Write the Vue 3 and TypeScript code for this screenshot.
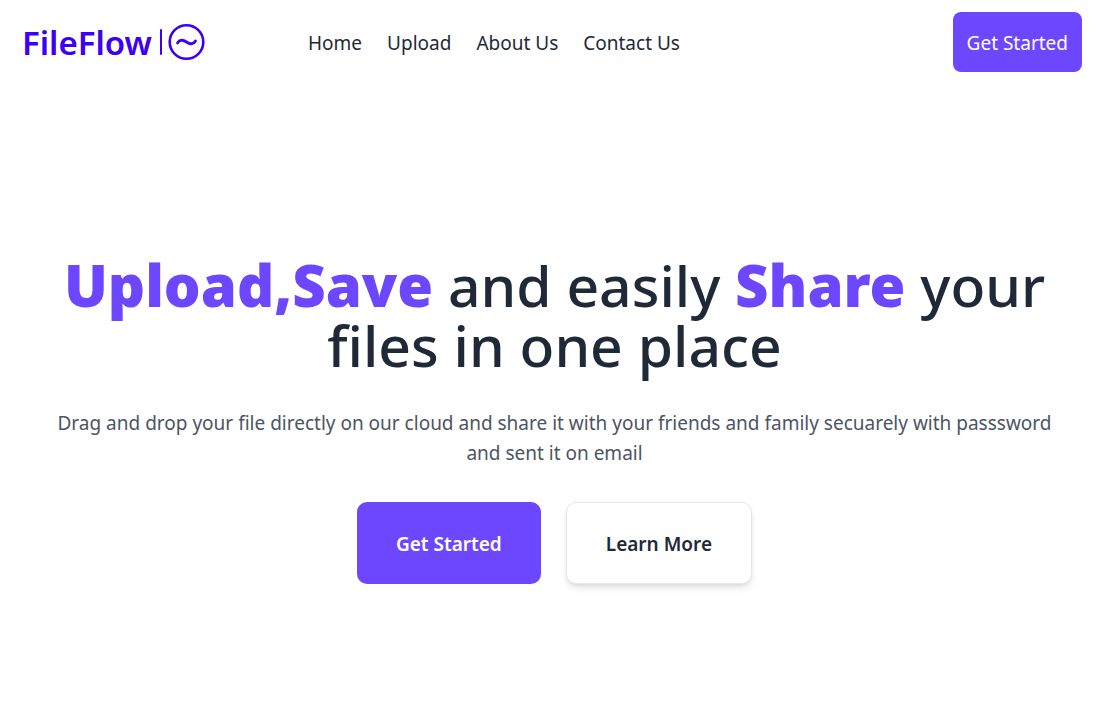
<script setup lang="ts">
interface NavLink {
  label: string
  href: string
}

const links: NavLink[] = [
  { label: 'Home', href: '#home' },
  { label: 'Upload', href: '#upload' },
  { label: 'About Us', href: '#about' },
  { label: 'Contact Us', href: '#contact' },
]
</script>

<template>
  <div class="page">
    <header class="header">
      <a class="logo" href="#home">
        <span class="logo-text">FileFlow</span>
        <svg class="logo-mark" width="48" height="40" viewBox="0 0 48 40" fill="none" stroke="currentColor" aria-hidden="true">
          <path d="M3 8V32" stroke-width="2" stroke-linecap="round" />
          <circle cx="28.5" cy="20" r="16.8" stroke-width="2.6" />
          <path d="M19.5 21C21.5 17.5 25 17.5 28.5 20S35.5 22.5 37.5 19" stroke-width="2.8" stroke-linecap="round" />
        </svg>
      </a>
      <nav class="nav" aria-label="Main">
        <a v-for="link in links" :key="link.label" :href="link.href">{{ link.label }}</a>
      </nav>
      <button class="header-button" type="button">Get Started</button>
    </header>
    <main class="hero">
      <h1><strong>Upload,Save</strong> and easily <strong>Share</strong> your files in one place</h1>
      <p>Drag and drop your file directly on our cloud and share it with your friends and family secuarely with passsword and sent it on email</p>
      <div class="actions">
        <button class="primary" type="button">Get Started</button>
        <button class="secondary" type="button">Learn More</button>
      </div>
    </main>
  </div>
</template>

<style>
body {
  margin: 0;
  background: #fff;
}
</style>

<style scoped>
.page {
  min-height: 100vh;
  font-family: "Noto Sans", "Open Sans", sans-serif;
  color: #1f2937;
}
.header {
  display: flex;
  align-items: center;
  padding: 12px 17px 12px 22px;
}
.logo {
  display: flex;
  align-items: center;
  gap: 6px;
  width: 286px;
  color: #3b00f5;
  text-decoration: none;
}
.logo-text {
  padding-top: 2px;
  font-size: 33px;
  line-height: 40px;
  font-weight: 600;
}
.nav {
  display: flex;
  gap: 25px;
  flex: 1;
}
.nav a {
  padding-top: 2px;
  font-size: 19px;
  line-height: 30px;
  color: #1f2937;
  text-decoration: none;
}
button {
  font-family: inherit;
  font-size: 19px;
  line-height: 30px;
  border: 0;
  white-space: nowrap;
  cursor: pointer;
}
.header-button {
  padding: 16px 14px 14px;
  border-radius: 8px;
  color: #fff;
  background: #6c47ff;
}
.hero {
  padding: 171px 46px 32px 56px;
  text-align: center;
}
h1 {
  margin: 0;
  font-size: 57px;
  line-height: 60px;
  font-weight: 500;
}
h1 strong {
  font-size: 58px;
  line-height: 1;
  font-weight: 900;
  color: #6c47ff;
}
p {
  margin: 33px 0 0;
  font-size: 19px;
  line-height: 30px;
  color: #4b5563;
}
.actions {
  display: flex;
  justify-content: center;
  gap: 25px;
  margin-top: 34px;
}
.actions button {
  padding: 27px 39px 25px;
  border-radius: 10px;
  font-weight: 600;
}
.actions .primary {
  color: #fff;
  background: #6c47ff;
}
.actions .secondary {
  padding: 26px 39px 24px;
  border: 1px solid #e5e7eb;
  color: #1f2937;
  background: #fff;
  box-shadow: 0 5px 7px -1px rgb(0 0 0 / 10%), 0 2px 5px -2px rgb(0 0 0 / 10%);
}
</style>
